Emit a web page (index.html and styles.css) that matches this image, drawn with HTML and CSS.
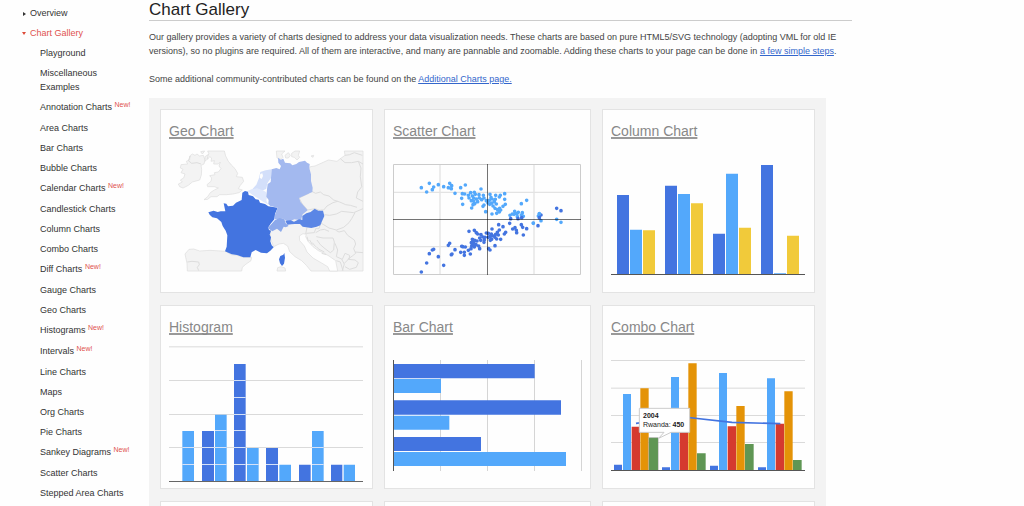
FILE: index.html
```html
<!DOCTYPE html>
<html lang="en">
<head>
<meta charset="utf-8">
<title>Chart Gallery</title>
<link rel="stylesheet" href="styles.css">
</head>
<body>
<div class="page">
  <nav class="sidebar" aria-label="Documentation">
    <ul class="nav">
      <li class="nav-item"><a href="#overview">Overview</a></li>
      <li class="nav-item current"><a href="#gallery">Chart Gallery</a>
        <ul class="subnav">
          <li><a href="#playground">Playground</a></li>
          <li><a href="#misc">Miscellaneous Examples</a></li>
          <li class="fresh"><a href="#annotation">Annotation Charts</a> <span class="new">New!</span></li>
          <li><a href="#area">Area Charts</a></li>
          <li><a href="#bar">Bar Charts</a></li>
          <li><a href="#bubble">Bubble Charts</a></li>
          <li class="fresh"><a href="#calendar">Calendar Charts</a> <span class="new">New!</span></li>
          <li><a href="#candlestick">Candlestick Charts</a></li>
          <li><a href="#column">Column Charts</a></li>
          <li><a href="#combo">Combo Charts</a></li>
          <li class="fresh"><a href="#diff">Diff Charts</a> <span class="new">New!</span></li>
          <li><a href="#gauge">Gauge Charts</a></li>
          <li><a href="#geo">Geo Charts</a></li>
          <li class="fresh"><a href="#histograms">Histograms</a> <span class="new">New!</span></li>
          <li class="fresh"><a href="#intervals">Intervals</a> <span class="new">New!</span></li>
          <li><a href="#line">Line Charts</a></li>
          <li><a href="#maps">Maps</a></li>
          <li><a href="#org">Org Charts</a></li>
          <li><a href="#pie">Pie Charts</a></li>
          <li class="fresh"><a href="#sankey">Sankey Diagrams</a> <span class="new">New!</span></li>
          <li><a href="#scatter">Scatter Charts</a></li>
          <li><a href="#stepped">Stepped Area Charts</a></li>
        </ul>
      </li>
    </ul>
  </nav>

  <main class="content">
    <h1>Chart Gallery</h1>
    <p>Our gallery provides a variety of charts designed to address your data visualization needs. These charts are based on pure HTML5/SVG technology (adopting VML for old IE versions), so no plugins are required. All of them are interactive, and many are pannable and zoomable. Adding these charts to your page can be done in <a href="#steps">a few simple steps</a>.</p>
    <p>Some additional community-contributed charts can be found on the <a href="#additional">Additional Charts page.</a></p>

    <div class="gallery">
      <section class="card">
        <h2><a href="#geo">Geo Chart</a></h2>
        <svg class="chart" viewBox="42 141 585 420" aria-hidden="true">
          <g class="land">
            <path d="M104 168L112 162 120 166 126 162 134 168 145 166 150 180 147 192 138 196 140 208 139 225 134 240 112 246 100 256 84 264 74 260 70 252 82 246 76 240 86 234 90 222 78 218 84 208 76 204 78 194 98 192 94 184 104 180z"/>
            <path d="M158 153L162 162 154 168 158 178 164 170 170 174 168 184 178 182 176 192 190 192 196 186 192 198 198 206 190 216 178 218 180 224 164 227 170 234 168 244 156 254 158 260 178 260 190 264 178 270 166 278 158 290 147 299 158 298 168 290 186 290 194 284 214 284 234 282 252 278 262 270 250 266 256 256 266 244 262 232 244 230 248 220 240 206 230 196 220 184 212 168 208 153z"/>
            <path d="M137 155L149 153 142 162zM150 170L160 164 156 178 150 184z"/>
            <path d="M97 513L96 490 90 462 102 448 116 447 134 453 165 451 212 454 228 464 246 466 265 472 290 472 288 482 272 493 262 502 260 513z"/>
            <path d="M346 390L346 415 356 440 372 432 385 430 398 438 404 455 420 470 440 482 454 496 468 513H624V153H568L570 166 556 176 546 184 520 180 498 190 480 198 466 200 440 240 380 350z"/>
            <path d="M366 513L368 503 378 500 390 504 392 513z"/>
            <path d="M364 153L366 174 378 178 384 172 380 162 390 153zM390 166L400 158 406 166 400 174 392 174zM410 160L420 153 434 153 430 166 434 172 426 180 418 172 410 170zM468 168l8-2-2 6z"/>
          </g>
          <path class="adriatic" d="M433 408L444 401 454 403 452 410 460 425 474 440 490 452 508 460 522 468 542 482 548 513H524L518 500 498 488 474 474 456 456 448 438 434 422z"/>
          <path class="border" d="M570 166l14-2 14-6 24 8M556 176l14 12 20 0 20-4 14 8M610 184l8 20-2 26 4 30-12 16-4 18 20 10M470 274l12 6 14-4 10 8 16 4 14 12 18 6 18 8 14 2 20 6M432 294l30-14M432 294l10 18 16 18 22-4 16 6M496 330l10 0 10-12 18-10 14-4M508 344l16 2 20-4 16-8 36 4 28-12M600 338l-10 18-8 12-16 14-22 8-22-6-16-10-10-6M496 372l-4 14-10 0-4 12-24 2M452 402l4-20M482 398l14-8 12-2 14 6M484 410l20 4 30 0 4 12-2 24-10 8-16-12-14-12-10-14M544 392l8 4 16-4 10 14 20 14 4 12-6 14 6 14-10 8-14 10M540 430l8 20-4 20 18 8 8-18 14 6-2 14M560 478l8 14-6 20M568 490l12-12 20 2 10 8-6 14-20 6-14-8M600 456l24 2M544 482l12 4 8 26M97 486l14-2 20 2 2 8-6 8 4 10M106 168l-6 14 10 8 16-2 12 4"/>
          <path class="border" d="M456 410l4 14M464 420l8 14M472 428l10 12M484 440l10 10M492 448l16 8M500 460l14 4"/>
          <path fill="#d3dffa" d="M316 216L332 211 350 208 348 234 337 250 334 266 322 272 306 266 290 270 304 254 312 234z"/>
          <path fill="#fefefe" d="M316 222l6-2 2 8-4 9-6-4z"/>
          <path fill="#dfe8fc" d="M277 273L290 268 306 265 322 270 333 276 336 292 334 302 340 314 322 304 308 294 294 286z"/>
          <path fill="#4374e0" d="M262 278L270 273 279 275 281 285 294 289 302 298 311 299 315 308 330 312 340 319 368 323 360 342 358 358 348 370 340 382 342 390 348 392 344 404 348 412 346 424 350 436 356 442 346 452 336 460 318 458 302 450 290 457 286 472 265 472 246 465 230 463 210 454 215 440 217 406 212 392 203 378 199 366 186 355 172 352 164 344 160 337 176 332 188 336 197 334 211 334 206 310 214 311 219 319 234 317 243 308 260 300z"/>
          <path fill="#a3b9ef" d="M369 173L377 179 385 176 390 188 406 190 412 196 424 192 432 186 450 182 456 188 464 192 463 205 468 223 468 243 473 263 472 276 432 294 437 307 458 331 443 343 438 361 418 358 402 366 384 356 360 358 360 344 368 323 346 318 340 312 341 300 334 290 336 268 338 252 347 246 350 208 364 204 374 208 378 198 370 188z"/>
          <path fill="#8ca9eb" d="M360 360L374 354 388 358 392 370 401 378 392 382 386 380 378 396 366 386 352 394 338 384 346 376z"/>
          <path fill="#5b86e5" d="M391 362L407 361 417 365 432 358 442 360 442 348 454 340 467 336 479 326 490 332 504 332 508 348 500 366 496 376 485 380 469 384 443 380 435 372 419 372 409 373 397 374z"/>
          <path fill="#4374e0" d="M388 459l2 14-3 18-6 7-6-8-3-12 4-10 9-4z"/>
        </svg>
      </section>

      <section class="card">
        <h2><a href="#scatter">Scatter Chart</a></h2>
        <svg class="chart" viewBox="39 141 567 420" aria-hidden="true">
          <g fill="none" stroke="#ccc" stroke-width="3">
            <path stroke="#e3e3e3" stroke-width="4" d="M180 194V523M462 194V523M41 277H602M41 440H602"/>
            <path d="M40.500 193.500H601.500V523.500H40.500z"/>
          </g>
          <g fill="none" stroke-width="11" stroke-linecap="round">
            <path stroke="#53a8fb" d="M124 263h0M148 250h0M140 276h0M157 269h0M161 261h0M175 254h0M191 260h0M205 263h0M209 250h0M215 257h0M214 266h0M225 280h0M242 263h0M256 255h0M303 267h0M247 281h0M254 282h0M245 295h0M248 313h0M265 286h0M267 294h0M272 278h0M277 288h0M283 277h0M286 283h0M281 294h0M289 297h0M274 302h0M281 304h0M284 311h0M279 314h0M275 324h0M293 305h0M297 284h0M298 294h0M305 299h0M310 286h0M312 294h0M309 319h0M312 315h0M317 335h0M319 302h0M324 309h0M328 301h0M330 283h0M333 292h0M336 297h0M329 313h0M335 309h0M339 318h0M343 305h0M347 286h0M346 298h0M349 312h0M345 325h0M336 342h0M350 340h0M353 329h0M358 291h0M361 286h0M374 281h0M374 298h0M376 313h0M369 319h0M359 325h0M362 330h0M358 336h0M424 311h0M440 301h0M404 334h0M411 341h0M402 343h0M390 346h0M397 342h0M412 350h0M415 337h0M427 338h0M430 349h0M424 345h0M478 341h0M475 348h0M483 362h0M460 370h0M530 358h0M543 367h0"/>
            <path stroke="#4374e0" d="M530 325h0M543 332h0M483 345h0M478 353h0M474 377h0M392 356h0M414 356h0M425 353h0M389 370h0M356 374h0M369 380h0M336 387h0M358 390h0M377 397h0M373 402h0M398 387h0M405 383h0M409 391h0M410 398h0M424 374h0M428 382h0M440 386h0M430 405h0M267 394h0M283 391h0M289 398h0M293 402h0M303 404h0M319 399h0M325 400h0M309 411h0M313 420h0M299 414h0M315 412h0M325 412h0M330 410h0M334 402h0M335 418h0M340 408h0M345 412h0M347 403h0M352 397h0M355 405h0M350 417h0M362 418h0M331 421h0M345 437h0M326 446h0M330 450h0M299 446h0M296 438h0M302 421h0M312 427h0M291 423h0M284 421h0M277 418h0M274 428h0M281 428h0M288 434h0M275 438h0M283 441h0M279 433h0M273 446h0M265 451h0M271 462h0M256 441h0M245 439h0M248 440h0M242 457h0M253 457h0M253 466h0M225 449h0M214 464h0M216 462h0M209 430h0M205 436h0M161 448h0M157 450h0M148 461h0M175 470h0M140 489h0M191 496h0M124 516h0"/>
            <path stroke="#53a8fb" d="M478 342h0M460 369h0"/>
          </g>
          <path fill="none" stroke="#000" stroke-opacity=".55" stroke-width="3" d="M322.500 192V525M39 358.500H603"/>
        </svg>
      </section>

      <section class="card">
        <h2><a href="#column">Column Chart</a></h2>
        <svg class="chart" viewBox="39 141 585 420" aria-hidden="true">
          <path fill="#4374e0" d="M57 285h36v238H57zM201 257h36v266h-36zM345 401h36v122h-36zM489 195h36v328h-36z"/>
          <path fill="#53a8fb" d="M96 389h36v134H96zM240 282h36v241h-36zM384 221h36v302h-36zM528 520h36v3h-36z"/>
          <path fill="#f1ca3a" d="M135 391h36v132h-36zM279 310h36v213h-36zM423 383h36v140h-36zM567 407h36v116h-36z"/>
          <path stroke="#555" stroke-width="3" d="M39 523.500H621"/>
        </svg>
      </section>

      <section class="card">
        <h2><a href="#histograms">Histogram</a></h2>
        <svg class="chart" viewBox="42 129 585 420" aria-hidden="true">
          <path stroke="#dadada" stroke-width="3" d="M42 140.500H624M42 241.500H624M42 343.500H624M42 442.500H624"/>
          <path fill="#4374e0" d="M141 393h36v150h-36zM237 192h35v351h-35zM333 444h36v99h-36zM432 494h35v49h-35zM528 494h34v49h-34z"/>
          <path fill="#53a8fb" d="M82 393h35v150H82zM180 344h35v199h-35zM276 444h35v99h-35zM373 494h35v49h-35zM471 393h35v150h-35zM566 494h34v49h-34z"/>
          <path stroke="#d5e1f7" stroke-width="3" d="M82 442.500h35M82 493.500h35M141 442.500h36M141 493.500h36M180 391.500h35M180 442.500h35M180 493.500h35M237 241.500h35M237 292.500h35M237 343.500h35M237 391.500h35M237 442.500h35M237 493.500h35M276 493.500h35M333 493.500h36M471 442.500h35M471 493.500h35"/>
          <path stroke="#666" stroke-width="3" d="M42 544.500H624"/>
        </svg>
      </section>

      <section class="card">
        <h2><a href="#bar">Bar Chart</a></h2>
        <svg class="chart" viewBox="39 129 567 420" aria-hidden="true">
          <path stroke="#d5d5d5" stroke-width="3" d="M181.500 180V513M322.500 180V513M463.500 180V513M604.500 180V513"/>
          <path fill="#4374e0" d="M41 192h423v43H41zM41 301h502v43H41zM41 411h262v42H41z"/>
          <path fill="#53a8fb" d="M41 237h142v42H41zM41 347h167v42H41zM41 456h517v42H41z"/>
          <path stroke="#555" stroke-width="3" d="M40.500 180V513"/>
        </svg>
      </section>

      <section class="card">
        <h2><a href="#combo">Combo Chart</a></h2>
        <svg class="chart" viewBox="39 129 585 420" aria-hidden="true">
          <path stroke="#dadada" stroke-width="3" d="M39 181.500H621M39 264.500H621M39 346.500H621M39 427.500H621"/>
          <path fill="#4374e0" d="M48 494h24v17H48zM192 502h24v9h-24zM336 497h24v14h-24zM480 502h24v9h-24z"/>
          <path fill="#53a8fb" d="M75 282h24v229H75zM219 231h24v280h-24zM363 219h24v292h-24zM507 235h24v276h-24z"/>
          <path fill="#d53a2f" d="M101 380h25v131h-25zM245 380h25v131h-25zM389 379h25v132h-25zM533 371h25v140h-25z"/>
          <path fill="#e49307" d="M127 265h25v246h-25zM271 190h25v321h-25zM415 318h25v193h-25zM559 274h25v237h-25z"/>
          <path fill="#5f9654" d="M153 413h27v98h-27zM297 460h26v51h-26zM441 432h26v79h-26zM585 480h26v31h-26z"/>
          <path fill="none" stroke="#999" stroke-opacity=".5" stroke-width="3" d="M151 511V413H181V511"/>
          <path stroke="#555" stroke-width="3" d="M39 511.500H621"/>
          <path fill="none" stroke="#4374e0" stroke-width="5" d="M114 370l144-19 144 16 145 4"/>
          <path fill="#fff" stroke="#ccc" stroke-width="3" d="M124 325H275V397H219L182 415 198 397H124z"/>
          <text class="tip" x="135" y="355" font-weight="bold">2004</text>
          <text class="tip" x="135" y="381">Rwanda: <tspan font-weight="bold">450</tspan></text>
        </svg>
      </section>

      <section class="card"></section>
      <section class="card"></section>
      <section class="card"></section>
    </div>
  </main>
</div>
</body>
</html>
```
FILE: styles.css
```css
* {
  box-sizing: border-box;
}

body {
  margin: 0;
  height: 100vh;
  overflow: hidden;
  background: #fefefe;
  color: #444;
  font: 9px/14px "Liberation Sans", Arial, sans-serif;
}

.page {
  display: grid;
  grid-template-columns: 149px minmax(0, 703px);
}

.sidebar a {
  color: #333;
  text-decoration: none;
}

.nav,
.subnav {
  margin: 0;
  padding: 0;
  list-style: none;
}

.nav {
  padding: 6px 16px 0 30px;
}

.nav-item {
  position: relative;
  margin-bottom: 6px;
}

.nav-item::before {
  content: "";
  position: absolute;
  left: -7px;
  top: 6px;
  border: 2px solid transparent;
  border-left: 3px solid #333;
  border-right: 0;
}

.nav-item.current::before {
  left: -8px;
  border: 2px solid transparent;
  border-top: 3px solid #dd4b39;
  border-bottom: 0;
}

.sidebar .current > a,
.new {
  color: #e0524e;
}

.subnav {
  padding: 6px 0 0 10px;
}

.subnav li {
  margin-bottom: 6px;
}

.subnav .fresh {
  margin-bottom: 7px;
  white-space: nowrap;
}

.new {
  font-size: 7px;
  line-height: 7px;
  vertical-align: 3px;
}

h1 {
  margin: 0 0 9px;
  padding-bottom: 1px;
  border-bottom: 1px solid #ccc;
  color: #222;
  font-size: 17px;
  font-weight: normal;
  line-height: 19px;
}

p {
  margin: 0 0 14px;
}

p:last-of-type {
  margin-bottom: 12px;
}

p a {
  color: #36c;
}

.gallery {
  display: grid;
  grid-template-columns: 213fr 207fr 213fr;
  gap: 12px 11px;
  max-width: 677px;
  padding: 11px;
  background: #f3f3f3;
}

.card {
  min-height: 184px;
  padding: 10px 8px 5px;
  border: 1px solid #e3e3e3;
  background: #fefefe;
}

h2 {
  margin: 0 0 5px;
  font-size: 14px;
  font-weight: normal;
  line-height: 22px;
}

h2 a {
  color: #888;
  text-decoration: underline 2px #999;
  text-decoration-skip-ink: none;
  text-underline-offset: 1px;
}

.chart {
  display: block;
  width: 100%;
  height: auto;
}

.land {
  fill: #f3f3f3;
  stroke: #ddd;
  stroke-width: 2;
}

.border {
  fill: none;
  stroke: #ddd;
  stroke-width: 3;
}

.adriatic {
  fill: #fefefe;
  stroke: #ddd;
  stroke-width: 2;
}

.tip {
  fill: #222;
  font-size: 21px;
}
```
